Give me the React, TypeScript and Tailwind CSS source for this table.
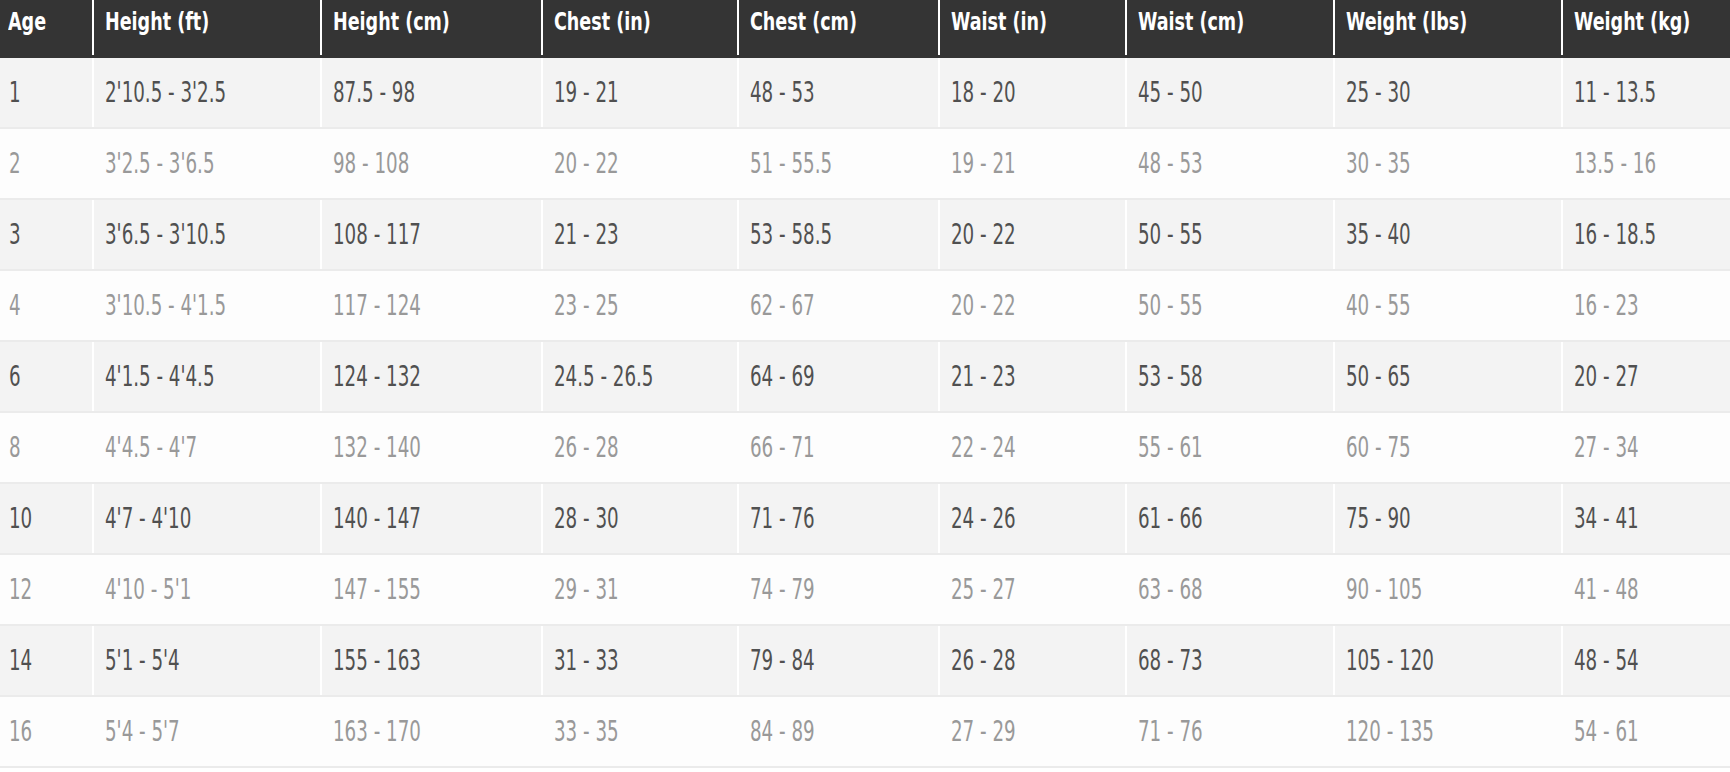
import React from "react";

// size chart columns
const columns = [
  "Age",
  "Height (ft)",
  "Height (cm)",
  "Chest (in)",
  "Chest (cm)",
  "Waist (in)",
  "Waist (cm)",
  "Weight (lbs)",
  "Weight (kg)",
];

const rows: string[][] = [
  ["1", "2'10.5 - 3'2.5", "87.5 - 98", "19 - 21", "48 - 53", "18 - 20", "45 - 50", "25 - 30", "11 - 13.5"],
  ["2", "3'2.5 - 3'6.5", "98 - 108", "20 - 22", "51 - 55.5", "19 - 21", "48 - 53", "30 - 35", "13.5 - 16"],
  ["3", "3'6.5 - 3'10.5", "108 - 117", "21 - 23", "53 - 58.5", "20 - 22", "50 - 55", "35 - 40", "16 - 18.5"],
  ["4", "3'10.5 - 4'1.5", "117 - 124", "23 - 25", "62 - 67", "20 - 22", "50 - 55", "40 - 55", "16 - 23"],
  ["6", "4'1.5 - 4'4.5", "124 - 132", "24.5 - 26.5", "64 - 69", "21 - 23", "53 - 58", "50 - 65", "20 - 27"],
  ["8", "4'4.5 - 4'7", "132 - 140", "26 - 28", "66 - 71", "22 - 24", "55 - 61", "60 - 75", "27 - 34"],
  ["10", "4'7 - 4'10", "140 - 147", "28 - 30", "71 - 76", "24 - 26", "61 - 66", "75 - 90", "34 - 41"],
  ["12", "4'10 - 5'1", "147 - 155", "29 - 31", "74 - 79", "25 - 27", "63 - 68", "90 - 105", "41 - 48"],
  ["14", "5'1 - 5'4", "155 - 163", "31 - 33", "79 - 84", "26 - 28", "68 - 73", "105 - 120", "48 - 54"],
  ["16", "5'4 - 5'7", "163 - 170", "33 - 35", "84 - 89", "27 - 29", "71 - 76", "120 - 135", "54 - 61"],
];

const gridCols =
  "grid grid-cols-[92px_228px_221px_196px_201px_187px_208px_228px_169px]";

export default function App() {
  return (
    <div className="w-[1730px] h-[772px] overflow-hidden bg-white font-['DejaVu_Sans_Condensed','Liberation_Sans',sans-serif]">
      {/* header */}
      <div className={`${gridCols} h-[58px] bg-[#343434] pb-[3px]`}>
        {columns.map((col, i) => (
          <div
            key={col}
            className={`flex items-start pt-[7px] ${
              i === 0 ? "pl-[8px]" : "pl-[11px] border-l-2 border-white"
            }`}
          >
            <span className="origin-left scale-x-[0.78] whitespace-nowrap text-[25px] leading-[30px] font-bold text-white">
              {col}
            </span>
          </div>
        ))}
      </div>

      {/* body */}
      {rows.map((row, r) => {
        const shaded = r % 2 === 0;
        return (
          <div
            key={row[0]}
            className={`${gridCols} h-[71px] border-b-2 border-[#ebebeb] ${
              shaded ? "bg-[#f3f3f3] text-[#505050]" : "bg-[#fdfdfd] text-[#999999]"
            }`}
          >
            {row.map((cell, i) => (
              <div
                key={i}
                className={`flex items-center ${
                  i === 0
                    ? "pl-[9px]"
                    : `pl-[11px] border-l-2 ${shaded ? "border-white" : "border-[#fdfdfd]"}`
                }`}
              >
                <span className="origin-left scale-x-[0.7] whitespace-nowrap text-[29px]">
                  {cell}
                </span>
              </div>
            ))}
          </div>
        );
      })}
    </div>
  );
}
